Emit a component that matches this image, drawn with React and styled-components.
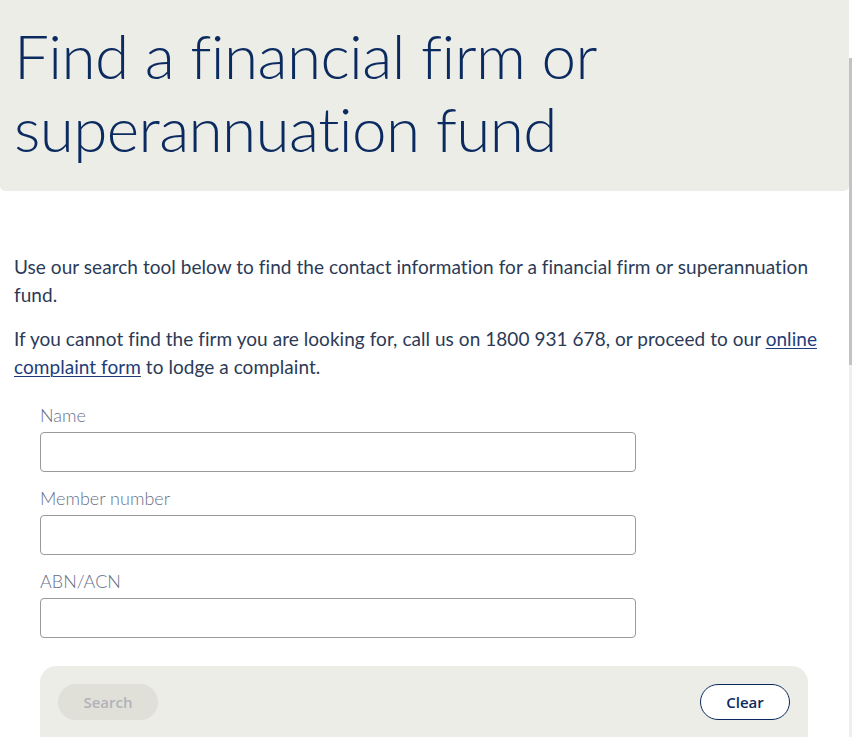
import styled, { createGlobalStyle } from 'styled-components';

const GlobalStyle = createGlobalStyle`
  html, body {
    margin: 0;
    padding: 0;
    background: #ffffff;
    overflow: hidden;
  }
  body {
    font-family: Lato, "Open Sans", sans-serif;
    color: #2b3a56;
  }
`;

const Page = styled.div`
  position: relative;
  width: 852px;
  height: 737px;
  overflow: hidden;
`;

const Hero = styled.header`
  width: 849px;
  height: 191px;
  box-sizing: border-box;
  background: #edede8;
  border-radius: 0 0 5px 5px;
  padding: 19px 0 0 14px;
`;

const Title = styled.h1`
  margin: 0;
  font-family: Lato, sans-serif;
  font-weight: 300;
  font-size: 62px;
  line-height: 73px;
  letter-spacing: -0.6px;
  color: #0b2a5f;
`;

const Content = styled.main`
  padding: 62px 34px 0 14px;
`;

const Paragraph = styled.p`
  margin: 0 0 16px;
  font-size: 19px;
  line-height: 28px;
  letter-spacing: 0.05px;
  color: #2b3a56;
`;

const TextLink = styled.a`
  color: #1f3c7a;
  text-decoration: underline;
  text-underline-offset: 2px;
  text-decoration-thickness: 1px;
`;

const Form = styled.form`
  margin: 23px 0 0 26px;
  display: flex;
  flex-direction: column;
`;

const Field = styled.div`
  display: flex;
  flex-direction: column;
  margin-bottom: 15px;
`;

const Label = styled.label`
  font-size: 18px;
  font-weight: 300;
  line-height: 22px;
  color: #687087;
  margin-bottom: 6px;
`;

const Input = styled.input`
  width: 596px;
  height: 40px;
  box-sizing: border-box;
  border: 1px solid #9a9a9a;
  border-radius: 4px;
  background: #fff;
  font-size: 16px;
  padding: 0 10px;
`;

const ActionBar = styled.div`
  width: 768px;
  height: 90px;
  box-sizing: border-box;
  margin-top: 13px;
  background: #edede8;
  border-radius: 16px;
  padding: 18px 18px 0;
  display: flex;
  justify-content: space-between;
  align-items: flex-start;
`;

const Button = styled.button`
  height: 36px;
  box-sizing: border-box;
  border-radius: 18px;
  font-family: "Open Sans", sans-serif;
  font-weight: 600;
  font-size: 15px;
  padding: 0;
  width: ${(p) => (p.$outline ? '90px' : '100px')};
  background: ${(p) => (p.$outline ? '#ffffff' : '#e0e0d8')};
  color: ${(p) => (p.$outline ? '#0b2a5f' : '#b1b2ba')};
  border: ${(p) => (p.$outline ? '1px solid #0b2a5f' : 'none')};
  cursor: pointer;
`;

const ScrollTrack = styled.div`
  position: absolute;
  top: 58px;
  right: 0;
  width: 3px;
  bottom: 0;
  background: #efefef;
`;

const ScrollThumb = styled.div`
  position: absolute;
  top: 0;
  left: 0;
  width: 3px;
  height: 307px;
  background: #c3c3c3;
`;

export default function App() {
  return (
    <Page>
      <GlobalStyle />
      <Hero>
        <Title>
          Find a financial firm or
          <br />
          superannuation fund
        </Title>
      </Hero>
      <Content>
        <Paragraph>
          Use our search tool below to find the contact information for a
          financial firm or superannuation fund.
        </Paragraph>
        <Paragraph>
          If you cannot find the firm you are looking for, call us on 1800 931
          678, or proceed to our{' '}
          <TextLink href="#">online complaint form</TextLink> to lodge a
          complaint.
        </Paragraph>
        <Form onSubmit={(e) => e.preventDefault()}>
          <Field>
            <Label htmlFor="name">Name</Label>
            <Input id="name" type="text" />
          </Field>
          <Field>
            <Label htmlFor="member">Member number</Label>
            <Input id="member" type="text" />
          </Field>
          <Field>
            <Label htmlFor="abn">ABN/ACN</Label>
            <Input id="abn" type="text" />
          </Field>
          <ActionBar>
            <Button type="submit" disabled>
              Search
            </Button>
            <Button type="button" $outline>
              Clear
            </Button>
          </ActionBar>
        </Form>
      </Content>
      <ScrollTrack>
        <ScrollThumb />
      </ScrollTrack>
    </Page>
  );
}
